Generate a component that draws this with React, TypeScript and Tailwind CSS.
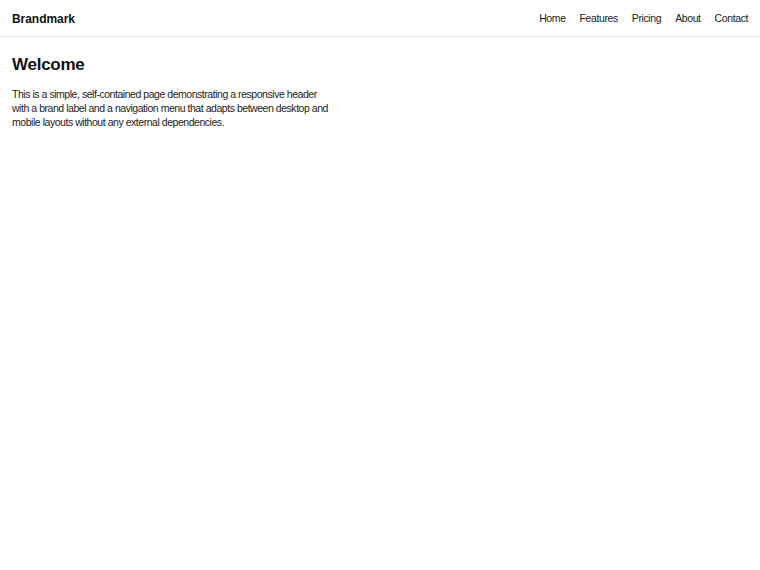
export default function App() {
  const links = ["Home", "Features", "Pricing", "About", "Contact"];

  return (
    <div className="min-h-screen bg-white text-[#111] font-['Liberation_Sans',Arial,sans-serif]">
      <header className="flex items-center justify-between h-[37px] pt-[2px] px-3 border-b border-[#e6e6e6]">
        <span className="text-[12px] font-bold tracking-[-0.05px]">Brandmark</span>
        <nav className="flex items-center gap-[14px] text-[10.5px] tracking-[-0.4px] text-[#222]">
          {links.map((link) => (
            <a key={link} href="#" className="hover:underline">
              {link}
            </a>
          ))}
        </nav>
      </header>

      <main className="px-3 pt-[16px]">
        <h1 className="text-[17px] font-bold leading-[24px] tracking-[-0.25px]">Welcome</h1>
        <p className="mt-[10px] max-w-[322px] text-[10.5px] leading-[14px] tracking-[-0.46px] text-[#222]">
          This is a simple, self-contained page demonstrating a responsive header with a brand label and a navigation menu that adapts between desktop and mobile layouts without any external dependencies.
        </p>
      </main>
    </div>
  );
}
